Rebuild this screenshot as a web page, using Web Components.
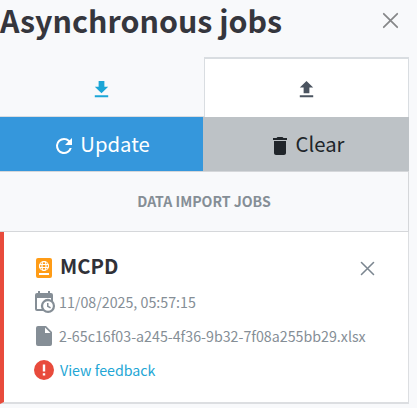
<!DOCTYPE html>
<html lang="en">
<head>
<meta charset="utf-8">
<title>Asynchronous jobs</title>
<style>
html,body{margin:0;height:100%;overflow:hidden;background:#f8f9fb}
body{font-family:"Noto Sans CJK SC","Noto Sans",sans-serif}
</style>
</head>
<body>
<jobs-panel></jobs-panel>
<script>
const define = (name, html) => customElements.define(name, class extends HTMLElement {
  constructor() {
    super();
    this.attachShadow({mode: 'open'}).innerHTML = html;
  }
});

const icons = {
  close: '<path d="M3.5 3.5 20.5 20.5M20.5 3.5 3.5 20.5" fill="none" stroke="currentColor" stroke-width="2.2" stroke-linecap="round"/>',
  download: '<path d="M19 9h-4V3H9v6H5l7 7 7-7zM5 18v2h14v-2z"/>',
  upload: '<path d="M9 16h6v-6h4l-7-7-7 7h4zM5 18v2h14v-2z"/>',
  refresh: '<path d="M17.65 6.35A7.96 7.96 0 0 0 12 4a8 8 0 1 0 7.73 10h-2.08A6 6 0 1 1 12 6c1.66 0 3.14.69 4.22 1.78L13 11h7V4z"/>',
  trash: '<path d="M6 19c0 1.1.9 2 2 2h8c1.1 0 2-.9 2-2V7H6zM19 4h-3.5l-1-1h-5l-1 1H5v2h14z"/>',
  passport: '<path fill-rule="evenodd" d="M6 2h12a2 2 0 0 1 2 2v16a2 2 0 0 1-2 2H6a2 2 0 0 1-2-2V4a2 2 0 0 1 2-2zm1 15v2h10v-2z"/><g fill="none" stroke="#fff" stroke-width="1.2"><circle cx="12" cy="10" r="4.5"/><ellipse cx="12" cy="10" rx="2" ry="4.5"/><path d="M7.6 8.5h8.8M7.6 11.5h8.8"/></g>',
  calendar: '<path fill-rule="evenodd" d="M15 13h1.5v2.82l2.44 1.41-.75 1.3L15 16.69zM19 8H5v11h4.67A7 7 0 0 1 19 9.67zM5 21a2 2 0 0 1-2-2V5a2 2 0 0 1 2-2h1V1h2v2h8V1h2v2h1a2 2 0 0 1 2 2v6.1A7 7 0 1 1 11.1 21zm11-9.85a4.85 4.85 0 1 0 0 9.7 4.85 4.85 0 0 0 0-9.7z"/>',
  file: '<path fill-rule="evenodd" d="M6 2a2 2 0 0 0-2 2v16a2 2 0 0 0 2 2h12a2 2 0 0 0 2-2V8l-6-6zM13 3.5 18.5 9H13z"/>',
  error: '<path fill-rule="evenodd" d="M12 2a10 10 0 1 0 0 20 10 10 0 0 0 0-20zm-1.2 4.5h2.4v7h-2.4zm0 8.7h2.4v2.3h-2.4z"/>'
};

customElements.define('job-icon', class extends HTMLElement {
  constructor() {
    super();
    this.attachShadow({mode: 'open'}).innerHTML = `<style>
      :host{display:block;flex:none;width:var(--size,24px);height:var(--size,24px)}
      svg{display:block;width:100%;height:100%;fill:currentColor}
    </style><svg viewBox="0 0 24 24" aria-hidden="true">${icons[this.getAttribute('name')]}</svg>`;
  }
});

define('panel-header', `<style>
  :host{display:flex;justify-content:space-between;height:57px;box-sizing:border-box;color:#35363d}
  h1{margin:0;font-size:30.4px;line-height:41px;font-weight:700;white-space:nowrap}
  job-icon{--size:19px;margin:11px 17px 0 0;color:#868789}
</style><h1><slot></slot></h1><job-icon name="close"></job-icon>`);

define('job-tab', `<style>
  :host{display:flex;align-items:center;justify-content:center;box-sizing:border-box;height:60px;padding:5px 1px 0 0;color:#1ba6d7;--size:23px;border-bottom:1px solid #d9dde1}
  :host([active]){background:#fff;color:#4b5460;border:1px solid #d9dde1;border-width:2px 1px 0 1px;padding:3px 0 0}
</style><slot></slot>`);

define('job-button', `<style>
  :host{display:flex;align-items:center;justify-content:center;gap:4px;height:54px;box-sizing:border-box;padding-right:1px;background:#3597dc;color:#fff;font-size:20.3px;line-height:54px;--size:24px}
  :host([kind=clear]){background:#bdc2c6;color:#20252a;padding-right:0}
  ::slotted(job-icon){margin-top:4px}
  span{display:block;height:54px;line-height:52px}
</style><slot name="icon"></slot><span><slot></slot></span>`);

define('section-title', `<style>
  :host{display:block;height:61px;box-sizing:border-box;border:1px solid #d5d7da;border-width:1px 1px 1px 0;text-align:center;font-size:14.1px;line-height:58px;font-weight:700;color:#858e96}
</style><slot></slot>`);

define('job-line', `<style>
  :host{display:flex;align-items:center;height:34px;gap:3px;color:#858e96;font-size:14.24px;line-height:34px;--size:24px;white-space:nowrap}
  :host([link]){gap:4px}
  :host([link]) span{color:#22a6d5}
</style><slot name="icon"></slot><span><slot></slot></span>`);

define('job-card', `<style>
  :host{display:block;box-sizing:border-box;height:172px;background:#fff;border:1px solid #dcdee1;border-width:0 1px 2px 0;border-left:4px solid #e84b3c;padding:19px 0 0 28px}
  header{display:flex;align-items:center;height:34px;color:#303138}
  h2{margin:0 0 5px 4px;font-size:20.2px;line-height:34px;font-weight:700;flex:1}
  header job-icon{--size:24px;color:#ff9c16}
  header .x{--size:17px;margin:0 32px 0 0;color:#7b8690}
</style><header><job-icon name="passport"></job-icon><h2><slot name="title"></slot></h2><job-icon class="x" name="close"></job-icon></header><slot></slot>`);

define('jobs-panel', `<style>
  :host{display:block;width:417px;height:408px}
  main{width:409px}
  .tabs{display:grid;grid-template-columns:204px 205px}
  .actions{display:grid;grid-template-columns:203px 206px}
</style>
<panel-header>Asynchronous jobs</panel-header>
<main>
  <div class="tabs"><job-tab><job-icon name="download"></job-icon></job-tab><job-tab active><job-icon name="upload"></job-icon></job-tab></div>
  <div class="actions"><job-button><job-icon slot="icon" name="refresh"></job-icon>Update</job-button><job-button kind="clear"><job-icon slot="icon" name="trash"></job-icon>Clear</job-button></div>
  <section-title>DATA IMPORT JOBS</section-title>
  <job-card><span slot="title">MCPD</span>
    <job-line><job-icon slot="icon" name="calendar"></job-icon>11/08/2025, 05:57:15</job-line>
    <job-line><job-icon slot="icon" name="file"></job-icon>2-65c16f03-a245-4f36-9b32-7f08a255bb29.xlsx</job-line>
    <job-line link><job-icon slot="icon" name="error" style="color:#e84b3c"></job-icon>View feedback</job-line>
  </job-card>
</main>`);
</script>
</body>
</html>
